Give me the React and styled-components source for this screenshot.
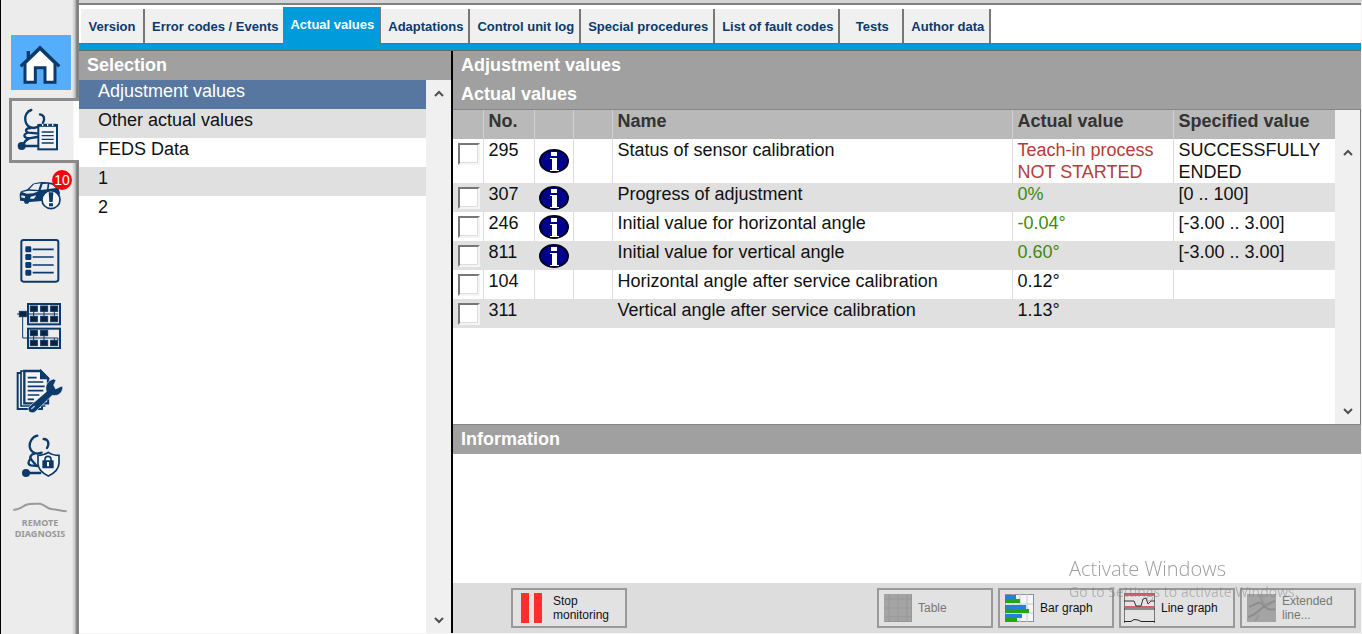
import React from "react";
import styled, { createGlobalStyle } from "styled-components";

const NAVY = "#0b3a6b";

const GlobalStyle = createGlobalStyle`
  * {
    box-sizing: border-box;
  }
  body {
    margin: 0;
    background: #ffffff;
    color: #111111;
    font-family: "Liberation Sans", Arial, sans-serif;
  }
  button {
    margin: 0;
    padding: 0;
    border: 0;
    background: none;
    color: inherit;
    font: inherit;
    text-align: left;
  }
  svg {
    display: block;
  }
`;

const Page = styled.div`
  display: flex;
  min-height: 100vh;
`;

const Sidebar = styled.nav`
  flex: none;
  display: flex;
  flex-direction: column;
  width: 79px;
  padding-top: 30px;
  border-left: 1px solid #000000;
  background: linear-gradient(
      to left,
      #8c8c8c 0,
      #777777 2px,
      #c4c4c4 4px,
      #ececec 7px
    )
    #ececec;
`;

const NavButton = styled.button`
  display: flex;
  flex-direction: column;
  align-items: center;
  justify-content: center;
  height: 65px;
`;

const HomeButton = styled(NavButton)`
  height: 68px;
  padding: 0 0 8px 2px;
`;

const HomeTile = styled.span`
  margin-top: 5px;
  background: #55aefc;
`;

const ActiveNavButton = styled(NavButton)`
  align-items: flex-start;
  margin-left: 8px;
  padding: 0 0 3px 5px;
  border: 3px solid #8a8a8a;
  border-right: 0;
  background: linear-gradient(to left, #ffffff 5px, #eeeeee 6px);
`;

const IconWrap = styled.span`
  position: relative;
`;

const Badge = styled.span`
  position: absolute;
  top: -11px;
  right: -10px;
  width: 20px;
  height: 20px;
  border-radius: 50%;
  background: #f4040c;
  color: #ffffff;
  font-size: 14px;
  line-height: 20px;
  text-align: center;
`;

const RemoteText = styled.span`
  margin-top: 4px;
  color: #999999;
  font-family: "Noto Sans", sans-serif;
  font-size: 9px;
  font-weight: 700;
  line-height: 11px;
  text-align: center;
`;

const Main = styled.main`
  flex: 1;
  min-width: 0;
  display: flex;
  flex-direction: column;
  border-top: 3px solid #d4d4d4;
  border-right: 1px solid #f4f4f4;
  border-bottom: 1px solid #f4f4f4;
`;

const TabBar = styled.div`
  display: flex;
  align-items: flex-end;
  height: 48px;
  padding-left: 2px;
  border-top: 2px solid #808080;
  border-bottom: 1px solid #5f6b73;
  background: linear-gradient(to top, #009bdb 6px, #5c6f7a 6px, #5c6f7a 7px, #ffffff 7px);
`;

const Tab = styled.button`
  height: 34px;
  min-width: 64px;
  margin-bottom: 7px;
  padding: 1px 5px 0 7px;
  border-right: 2px solid #777777;
  background: #f0f0f0;
  color: ${NAVY};
  font-size: 13px;
  font-weight: 700;
  line-height: 34px;
  text-align: center;
  white-space: nowrap;
  &:first-child {
    padding-right: 7px;
  }
`;

const ActiveTab = styled(Tab)`
  height: 37px;
  margin-bottom: 6px;
  margin-left: -2px;
  padding-bottom: 3px;
  background: #009bdb;
  color: #ffffff;
`;

const Panels = styled.div`
  flex: 1;
  display: grid;
  grid-template-columns: 372px minmax(0, 1fr);
`;

const Panel = styled.section`
  display: flex;
  flex-direction: column;
  min-width: 0;
`;

const ValuesPanel = styled(Panel)`
  border-left: 2px solid #000000;
`;

const Heading = styled.h2`
  margin: 0;
  padding-left: 8px;
  background: #a0a0a0;
  color: #ffffff;
  font-size: 18px;
  font-weight: 700;
  line-height: 29px;
`;

const RuledHeading = styled(Heading)`
  border-top: 1px solid #858585;
`;

const PanelBody = styled.div`
  flex: 1;
  display: flex;
`;

const DataBody = styled(PanelBody)`
  border-top: 1px solid #858585;
  border-right: 1px solid #777777;
`;

const SelectionList = styled.ul`
  flex: 1;
  margin: 0;
  padding: 0;
  list-style: none;
`;

const SelectionItem = styled.button`
  display: block;
  width: 100%;
  height: 29px;
  padding: 0 0 7px 19px;
  background: ${(p) => (p.$selected ? "#5877a0" : p.$shaded ? "#e0e0e0" : "#ffffff")};
  color: ${(p) => (p.$selected ? "#ffffff" : "#111111")};
  font-size: 18px;
  line-height: 22px;
`;

const ScrollTrack = styled.div`
  flex: none;
  display: flex;
  flex-direction: column;
  justify-content: space-between;
  width: 25px;
  padding-top: ${(p) => (p.$belowHeader ? "29px" : "0")};
  background: #f0f0f0;
`;

const ScrollButton = styled.button`
  display: flex;
  align-items: center;
  justify-content: center;
  height: 26px;
`;

const TableWrap = styled.div`
  flex: 1;
  min-width: 0;
`;

const Table = styled.table`
  width: 100%;
  table-layout: fixed;
  border-collapse: collapse;
  font-size: 18px;
  line-height: 22px;
`;

const Col = styled.col`
  width: ${(p) => p.$width};
`;

const Th = styled.th`
  height: 29px;
  padding: 0 0 7px 5px;
  border-left: 1px solid #d2d2d2;
  background: #b9b9b9;
  color: #333333;
  text-align: left;
  &:first-child {
    border-left: 0;
  }
`;

const Td = styled.td`
  height: 29px;
  padding: 0 0 0 5px;
  border-left: 1px solid ${(p) => (p.$shaded ? "#e0e0e0" : "#dcdcdc")};
  background: ${(p) => (p.$shaded ? "#e0e0e0" : "#ffffff")};
  color: ${(p) => p.$color || "#111111"};
  vertical-align: top;
  &:first-child {
    border-left: 0;
  }
`;

const CheckCell = styled(Td)`
  padding: 4px 0 0 5px;
`;

const InfoCell = styled(Td)`
  padding: 0 0 0 4px;
  vertical-align: middle;
`;

const Checkbox = styled.input`
  appearance: none;
  display: block;
  width: 22px;
  height: 22px;
  margin: 0;
  border: 2px solid;
  border-color: #777777 #f4f4f4 #f4f4f4 #777777;
  background: #ffffff;
  box-shadow: inset -1px -1px 0 #dddddd;
`;

const InfoButton = styled.button`
  display: block;
`;

const InformationBody = styled.div`
  height: 129px;
  background: #ffffff;
`;

const Toolbar = styled.div`
  display: flex;
  gap: 5px;
  height: 50px;
  padding: 5px 5px 5px 58px;
  background: #dddddd;
`;

const Spacer = styled.div`
  flex: 1;
`;

const ToolButton = styled.button`
  display: flex;
  align-items: center;
  gap: ${(p) => p.$gap || "6px"};
  width: 116px;
  height: 40px;
  padding-left: ${(p) => p.$inset || "5px"};
  border: 2px solid #999999;
  background: #e2e2e2;
  color: #111111;
  font-size: 12px;
  line-height: 14px;
  &:disabled {
    color: #777777;
  }
`;

const Watermark = styled.div`
  position: fixed;
  right: 56px;
  bottom: 31px;
  width: 237px;
  color: rgba(125, 125, 125, 0.45);
  font-family: "Open Sans", "Noto Sans", sans-serif;
  font-size: 14px;
  line-height: 22px;
  white-space: nowrap;
  pointer-events: none;
`;

const WatermarkTitle = styled.div`
  font-size: 20px;
  font-weight: 300;
  line-height: 24px;
  color: rgba(90, 90, 90, 0.6);
`;

const HomeIcon = () => (
  <svg width="60" height="55" viewBox="0 0 180 165">
    <path d="M52 48V76" stroke={NAVY} strokeWidth="10" />
    <path
      d="M42 84L87 40L132 84V142H102V98H73V142H42Z"
      fill="#ffffff"
      stroke={NAVY}
      strokeWidth="9"
    />
    <path d="M29 94L87 38L145 94" fill="none" stroke={NAVY} strokeWidth="9" />
  </svg>
);

const StethoscopeClipboardIcon = () => (
  <svg width="42" height="43" viewBox="6 8 126 129" fill="none" stroke={NAVY}>
    <g strokeWidth="7" strokeLinecap="round">
      <path d="M49 14C36 17 28 32 31 46C33 58 42 67 56 68L72 64" />
      <path d="M75 27C87 29 91 40 84 52" />
      <path d="M48 68C32 68 28 78 40 82L66 84" />
      <path d="M36 83C24 88 26 98 42 99L66 95" />
      <path d="M42 99C32 104 28 110 25 118" />
      <path d="M24 122H66" />
    </g>
    <circle cx="20" cy="122" r="12" fill={NAVY} stroke="none" />
    <rect x="70" y="59" width="56" height="73" fill="#f4f4f4" strokeWidth="6" />
    <path d="M72 60H124" strokeWidth="9" />
    <path d="M83 56V62M98 56V62M113 56V62" stroke="#f4f4f4" strokeWidth="4" />
    <path d="M80 80H116M80 91H116M80 102H116M80 113H116" strokeWidth="4" />
  </svg>
);

const CarIcon = () => (
  <svg width="44" height="30" viewBox="50 66 132 90">
    <path
      d="M55 105L59 97L78 91L95 74C112 68 135 67 154 72L171 86L176 102L172 120L112 127L84 129L80 134H71L67 126L56 125Z"
      fill={NAVY}
    />
    <path
      d="M84 91L98 76L118 73L111 93ZM118 93L124 75L139 74L137 91ZM142 90L144 75L153 77L164 87Z"
      fill="#ececec"
    />
    <path
      d="M62 99L82 95L112 97L96 103L76 104ZM61 109L72 112L70 118L59 115ZM88 113L105 109L98 119L86 119Z"
      fill="#ececec"
    />
    <circle cx="149" cy="122" r="27" fill="#f4f4f4" stroke={NAVY} strokeWidth="5" />
    <path d="M142 100H156L154 129H144ZM143 133H155V142H143Z" fill={NAVY} />
  </svg>
);

const ListIcon = () => (
  <svg width="40" height="44" viewBox="55 233 120 132" fill="none" stroke={NAVY}>
    <rect x="59" y="236" width="111" height="125" rx="7" strokeWidth="6" />
    <path d="M93 264H156M93 287H156M93 311H156M93 334H156" strokeWidth="5" />
    {[264, 287, 311, 334].map((y) => (
      <rect key={y} x="71" y={y - 9} width="18" height="18" rx="4" fill={NAVY} stroke="none" />
    ))}
  </svg>
);

const NetworkIcon = () => (
  <svg width="46" height="46" viewBox="47 426 138 138" fill="none" stroke={NAVY}>
    <rect x="80" y="429" width="96" height="61" strokeWidth="6" />
    <rect x="80" y="503" width="96" height="58" strokeWidth="6" />
    <path
      d="M47 459H170M64 459V531H170V538M97 450V466M128 450V466M159 450V466M97 522V540M128 522V540M159 531V540"
      strokeWidth="3"
    />
    <g fill="#0a2340" stroke={NAVY} strokeWidth="3">
      <rect x="54" y="451" width="21" height="16" />
      {[87, 118, 148].map((x) => (
        <React.Fragment key={x}>
          <rect x={x} y="435" width="21" height="16" />
          <rect x={x} y="466" width="21" height="16" />
          <rect x={x} y="538" width="21" height="16" />
        </React.Fragment>
      ))}
      <rect x="87" y="508" width="21" height="16" />
      <rect x="118" y="508" width="21" height="16" />
    </g>
  </svg>
);

const ServiceIcon = () => (
  <svg width="48" height="45" viewBox="8 5 144 135" fill="none" stroke={NAVY}>
    <path d="M24 20H13V128H86V120" strokeWidth="6" />
    <path d="M34 14H23V119H96" strokeWidth="5" />
    <path d="M33 14H82L104 36V111H33Z" fill="#f4f4f4" strokeWidth="7" />
    <path d="M82 12V37H106Z" fill={NAVY} strokeWidth="4" />
    <path d="M43 34H70M43 47H90M43 60H94M43 73H90M43 86H78M43 99H62" strokeWidth="5" />
    <path
      d="M46 122L99 76C94 58 102 43 121 38L128 42L121 56L127 68L139 62L148 59C150 77 136 91 117 87L66 136C54 145 40 135 46 122Z"
      fill={NAVY}
      stroke="#ececec"
      strokeWidth="2"
    />
    <path d="M54 128L64 119" stroke="#b8c8dc" strokeWidth="4" />
  </svg>
);

const SecureIcon = () => (
  <svg width="40" height="44" viewBox="13 8 120 132" fill="none" stroke={NAVY}>
    <g strokeWidth="7" strokeLinecap="round">
      <path d="M65 13C50 16 40 32 42 46C44 58 52 66 66 67L78 64" />
      <path d="M84 23C98 24 102 36 94 50" />
      <path d="M56 67C44 70 40 80 48 86L60 100" />
      <path d="M46 82C36 90 36 100 46 102L68 104" />
      <path d="M34 125H74" />
    </g>
    <circle cx="31" cy="125" r="12" fill={NAVY} stroke="none" />
    <path
      d="M98 63C88 70 78 72 67 72V96C67 114 81 126 98 134C115 126 129 114 130 96V72C119 72 108 70 98 63Z"
      fill="#f4f4f4"
      strokeWidth="5"
    />
    <path d="M88 90V84C88 72 106 72 106 84V90" strokeWidth="5" />
    <rect x="80" y="87" width="34" height="24" rx="2" fill={NAVY} stroke="none" />
    <path d="M97 92V105" stroke="#ffffff" strokeWidth="6" />
  </svg>
);

const RemoteIcon = () => (
  <svg width="54" height="11" viewBox="40 440 162 33" fill="none">
    <path
      d="M41 464C60 463 67 454 78 449C90 444 106 446 121 445C135 448 143 461 158 462C174 463 184 467 201 468"
      stroke="#999999"
      strokeWidth="6"
    />
  </svg>
);

const InfoIcon = () => (
  <svg width="30" height="24" viewBox="0 0 30 24">
    <ellipse cx="15" cy="12" rx="14" ry="11" fill="#00008c" stroke="#000020" strokeWidth="2" />
    <path d="M12 3H18V7H12ZM11 9H18V21H20V22H11V21H13V10H11Z" fill="#ffffff" />
  </svg>
);

const Chevron = ({ down }) => (
  <svg width="10" height="7" viewBox="0 0 10 7" fill="none" stroke="#505050" strokeWidth="2">
    <path d={down ? "M1 1L5 5L9 1" : "M1 6L5 2L9 6"} />
  </svg>
);

const StopIcon = () => (
  <svg width="22" height="30" viewBox="0 0 22 30" fill="#ff2d2f">
    <path d="M0 0H8V30H0ZM13 0H21V30H13Z" />
  </svg>
);

const TableIcon = () => (
  <svg width="28" height="28" viewBox="0 0 28 28" fill="none">
    <rect width="28" height="28" fill="#a4a4a4" />
    <path d="M5 0V28M14 0V28M23 0V28M0 5H28M0 14H28M0 23H28" stroke="#989898" />
    <path d="M0 28H28V0" stroke="#8c8c8c" />
  </svg>
);

const BarGraphIcon = () => (
  <svg width="29" height="28" viewBox="0 0 29 28" fill="none">
    <rect x="0.5" y="0.5" width="28" height="27" fill="#f6f6fa" stroke="#909098" />
    <path d="M8 0V28M15 0V28M22 0V28M0 10H28M0 19H28" stroke="#c8c8d2" />
    <path d="M0 1H11V5H0ZM0 11H21V15H0ZM0 20H17V24H0Z" fill="#2382d8" />
    <path d="M0 5H15V9H0ZM0 15H24V19H0ZM0 24H12V28H0Z" fill="#23a514" />
  </svg>
);

const LineGraphIcon = () => (
  <svg width="31" height="30" viewBox="0 0 31 30" fill="none">
    <rect width="31" height="30" fill="#e4e4e4" />
    <path d="M0 2H31M0 14H31" stroke="#d9606a" strokeWidth="2" />
    <path d="M0 0.5H31M0.5 1V30M30.5 1V30" stroke="#777777" />
    <path d="M0 16H31" stroke="#333333" />
    <path d="M0 8H10L12 13H17L19 6L22 5L24 11L27 8H31" stroke="#333333" />
    <path d="M0 28.5H7L10 26.5L14 27L17 28.5H31" stroke="#222222" />
  </svg>
);

const ExtendedLineIcon = () => (
  <svg width="29" height="28" viewBox="0 0 29 28" fill="none">
    <rect width="29" height="28" fill="#a4a4a4" />
    <path
      d="M1 23C10 22 14 11 28 7M2 13C10 10 11 7 15 10C20 14 20 17 28 15"
      stroke="#8d8d8d"
      strokeWidth="2"
    />
    <path d="M13 1L16 9L20 12M12 21L8 27" stroke="#969696" strokeWidth="2" />
  </svg>
);

const TABS = [
  "Version",
  "Error codes / Events",
  "Actual values",
  "Adaptations",
  "Control unit log",
  "Special procedures",
  "List of fault codes",
  "Tests",
  "Author data",
];

const SELECTION = ["Adjustment values", "Other actual values", "FEDS Data", "1", "2"];

const RED = "#b73a3a";
const GREEN = "#3f8a0a";

const ROWS = [
  {
    no: "295",
    info: true,
    name: "Status of sensor calibration",
    value: "Teach-in process NOT STARTED",
    color: RED,
    spec: "SUCCESSFULLY ENDED",
  },
  { no: "307", info: true, name: "Progress of adjustment", value: "0%", color: GREEN, spec: "[0 .. 100]" },
  {
    no: "246",
    info: true,
    name: "Initial value for horizontal angle",
    value: "-0.04°",
    color: GREEN,
    spec: "[-3.00 .. 3.00]",
  },
  {
    no: "811",
    info: true,
    name: "Initial value for vertical angle",
    value: "0.60°",
    color: GREEN,
    spec: "[-3.00 .. 3.00]",
  },
  { no: "104", name: "Horizontal angle after service calibration", value: "0.12°" },
  { no: "311", name: "Vertical angle after service calibration", value: "1.13°" },
];

const Scrollbar = ({ belowHeader }) => (
  <ScrollTrack $belowHeader={belowHeader}>
    <ScrollButton aria-label="Scroll up">
      <Chevron />
    </ScrollButton>
    <ScrollButton aria-label="Scroll down">
      <Chevron down />
    </ScrollButton>
  </ScrollTrack>
);

const SideNav = () => (
  <Sidebar>
    <HomeButton aria-label="Home">
      <HomeTile>
        <HomeIcon />
      </HomeTile>
    </HomeButton>
    <ActiveNavButton aria-label="Diagnosis">
      <StethoscopeClipboardIcon />
    </ActiveNavButton>
    <NavButton aria-label="Vehicle events">
      <IconWrap>
        <CarIcon />
        <Badge>10</Badge>
      </IconWrap>
    </NavButton>
    <NavButton aria-label="List">
      <ListIcon />
    </NavButton>
    <NavButton aria-label="Control units">
      <NetworkIcon />
    </NavButton>
    <NavButton aria-label="Service documents">
      <ServiceIcon />
    </NavButton>
    <NavButton aria-label="Secure diagnosis">
      <SecureIcon />
    </NavButton>
    <NavButton>
      <RemoteIcon />
      <RemoteText>
        REMOTE
        <br />
        DIAGNOSIS
      </RemoteText>
    </NavButton>
  </Sidebar>
);

const ValuesTable = () => (
  <Table>
    <colgroup>
      <Col $width="30px" />
      <Col $width="51px" />
      <Col $width="39px" />
      <Col $width="39px" />
      <Col />
      <Col $width="161px" />
      <Col $width="162px" />
    </colgroup>
    <thead>
      <tr>
        <Th />
        <Th>No.</Th>
        <Th />
        <Th />
        <Th>Name</Th>
        <Th>Actual value</Th>
        <Th>Specified value</Th>
      </tr>
    </thead>
    <tbody>
      {ROWS.map((row, i) => {
        const shaded = i % 2 === 1;
        return (
          <tr key={row.no}>
            <CheckCell $shaded={shaded}>
              <Checkbox type="checkbox" aria-label={row.name} />
            </CheckCell>
            <Td $shaded={shaded}>{row.no}</Td>
            <InfoCell $shaded={shaded}>
              {row.info && (
                <InfoButton aria-label="Info">
                  <InfoIcon />
                </InfoButton>
              )}
            </InfoCell>
            <Td $shaded={shaded} />
            <Td $shaded={shaded}>{row.name}</Td>
            <Td $shaded={shaded} $color={row.color}>
              {row.value}
            </Td>
            <Td $shaded={shaded}>{row.spec}</Td>
          </tr>
        );
      })}
    </tbody>
  </Table>
);

const App = () => {
  return (
    <>
      <GlobalStyle />
      <Page>
        <SideNav />
        <Main>
          <TabBar role="tablist">
            {TABS.map((tab) => {
              const active = tab === "Actual values";
              const Item = active ? ActiveTab : Tab;
              return (
                <Item key={tab} role="tab" aria-selected={active}>
                  {tab}
                </Item>
              );
            })}
          </TabBar>
          <Panels>
            <Panel>
              <Heading>Selection</Heading>
              <PanelBody>
                <SelectionList>
                  {SELECTION.map((item, i) => (
                    <li key={item}>
                      <SelectionItem $selected={i === 0} $shaded={i % 2 === 1}>
                        {item}
                      </SelectionItem>
                    </li>
                  ))}
                </SelectionList>
                <Scrollbar />
              </PanelBody>
            </Panel>
            <ValuesPanel>
              <Heading>Adjustment values</Heading>
              <Heading>Actual values</Heading>
              <DataBody>
                <TableWrap>
                  <ValuesTable />
                </TableWrap>
                <Scrollbar belowHeader />
              </DataBody>
              <RuledHeading>Information</RuledHeading>
              <InformationBody />
              <Toolbar>
                <ToolButton $gap="10px" $inset="8px">
                  <StopIcon />
                  <span>
                    Stop
                    <br />
                    monitoring
                  </span>
                </ToolButton>
                <Spacer />
                <ToolButton disabled>
                  <TableIcon />
                  Table
                </ToolButton>
                <ToolButton>
                  <BarGraphIcon />
                  Bar graph
                </ToolButton>
                <ToolButton $inset="3px">
                  <LineGraphIcon />
                  Line graph
                </ToolButton>
                <ToolButton disabled>
                  <ExtendedLineIcon />
                  <span>
                    Extended
                    <br />
                    line...
                  </span>
                </ToolButton>
              </Toolbar>
            </ValuesPanel>
          </Panels>
        </Main>
        <Watermark>
          <WatermarkTitle>Activate Windows</WatermarkTitle>
          Go to Settings to activate Windows.
        </Watermark>
      </Page>
    </>
  );
};

export default App;
